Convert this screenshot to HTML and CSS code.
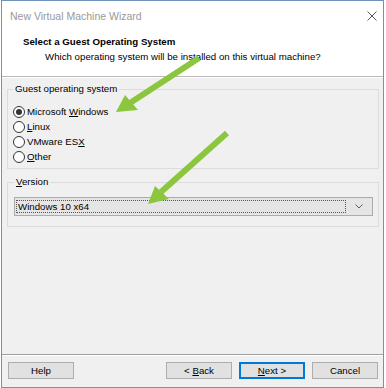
FILE: index.html
```html
<!DOCTYPE html>
<html lang="en">
<head>
    <meta charset="UTF-8">
    <title>New Virtual Machine Wizard</title>
    <link rel="stylesheet" href="styles.css">
</head>
<body>
    <div class="window">
        <div class="titlebar">
            <span class="title">New Virtual Machine Wizard</span>
            <svg class="close" width="10" height="10" viewBox="0 0 10 10">
                <path d="M0.5 0.5 L9.5 9.5 M9.5 0.5 L0.5 9.5" stroke="#555" stroke-width="1" fill="none"/>
            </svg>
        </div>

        <div class="header">
            <div class="header-title">Select a Guest Operating System</div>
            <div class="header-sub">Which operating system will be installed on this virtual machine?</div>
        </div>

        <div class="content">
            <fieldset class="group">
                <legend>Guest operating system</legend>
                <div class="radio-row"><span class="radio checked"></span><span>Microsoft <u>W</u>indows</span></div>
                <div class="radio-row"><span class="radio"></span><span><u>L</u>inux</span></div>
                <div class="radio-row"><span class="radio"></span><span>VMware ES<u>X</u></span></div>
                <div class="radio-row"><span class="radio"></span><span><u>O</u>ther</span></div>
            </fieldset>

            <fieldset class="group version">
                <legend><u>V</u>ersion</legend>
                <div class="select">
                    <div class="select-value">Windows 10 x64</div>
                    <div class="select-btn">
                        <svg width="8" height="5" viewBox="0 0 8 5">
                            <path d="M0.5 0.5 L4 4 L7.5 0.5" stroke="#606060" stroke-width="1" fill="none"/>
                        </svg>
                    </div>
                </div>
            </fieldset>
        </div>

        <div class="footer">
            <button class="btn">Help</button>
            <div class="spacer"></div>
            <button class="btn">&lt; <u>B</u>ack</button>
            <button class="btn default"><u>N</u>ext &gt;</button>
            <button class="btn">Cancel</button>
        </div>
    </div>

    <!-- annotation arrows drawn over the dialog -->
    <svg class="arrows" width="386" height="388" viewBox="0 0 386 388">
        <line x1="199" y1="58" x2="130" y2="103" stroke="#8cc63e" stroke-width="6"/>
        <polygon points="116,112 125,95 138,110" fill="#8cc63e"/>
        <line x1="227" y1="133" x2="161" y2="192" stroke="#8cc63e" stroke-width="6"/>
        <polygon points="148,204 155,186 169,199" fill="#8cc63e"/>
    </svg>
</body>
</html>
```

FILE: styles.css
```css
body {
    margin: 0;
    background-color: #fff;
    font-family: "Liberation Sans", Arial, sans-serif;
    font-size: 9.7px;
    color: #000;
}
.window {
    position: relative;
    margin-left: 1px;
    width: 383px;
    height: 388px;
    box-sizing: border-box;
    border: 1px solid #6f93bd;
    display: flex;
    flex-direction: column;
    background-color: #f0f0f0;
}
.titlebar {
    height: 29px;
    background-color: #fff;
    display: flex;
    align-items: center;
    padding: 0 6px 0 8px;
}
.title {
    flex: 1;
    font-size: 10.5px;
    color: #999;
}
.header {
    background-color: #fff;
    padding: 4px 0 12px;
    border-bottom: 1px solid #b9b9b9;
}
.header-title {
    padding-left: 21px;
    font-weight: bold;
    line-height: 15px;
}
.header-sub {
    padding-left: 43px;
    line-height: 15px;
}
.content {
    flex: 1;
    padding: 4px 4px 0 5px;
    border-top: 1px solid #fff;
}
.group {
    margin: 0;
    border: 1px solid #dcdcdc;
    padding: 8px 5px 4px 5px;
}
.group legend {
    padding: 0 2px;
    line-height: 14px;
}
.version {
    margin-top: 6px;
    padding: 8px 5px 10px 6px;
}
.radio-row {
    height: 15px;
    display: flex;
    align-items: center;
}
.radio {
    width: 12px;
    height: 12px;
    box-sizing: border-box;
    border: 1px solid #333;
    border-radius: 50%;
    background-color: #fff;
    margin-right: 2px;
    display: flex;
    align-items: center;
    justify-content: center;
}
.radio.checked::after {
    content: "";
    width: 6px;
    height: 6px;
    border-radius: 50%;
    background-color: #333;
}
.select {
    height: 19px;
    box-sizing: border-box;
    border: 1px solid #acacac;
    background-color: #e5e5e5;
    display: flex;
    align-items: stretch;
}
.select-value {
    flex: 1;
    margin: 2px 0 2px 1px;
    border: 1px dotted #555;
    padding-left: 1px;
    display: flex;
    align-items: center;
}
.select-btn {
    width: 26px;
    display: flex;
    align-items: center;
    justify-content: center;
}
.footer {
    border-top: 1px solid #a0a0a0;
    box-shadow: inset 0 1px 0 #fff;
    padding: 7px 5px 8px 6px;
    display: flex;
    gap: 7px;
}
.spacer {
    flex: 1;
}
.btn {
    width: 66px;
    height: 17px;
    margin: 0;
    padding: 0;
    font-family: inherit;
    font-size: inherit;
    color: #000;
    background-color: #e1e1e1;
    border: 1px solid #adadad;
    border-radius: 0;
}
.btn.default {
    border-color: #0078d7;
    box-shadow: inset 0 0 0 1px #0078d7;
}
.arrows {
    position: absolute;
    top: 0;
    left: 0;
    pointer-events: none;
}
```
